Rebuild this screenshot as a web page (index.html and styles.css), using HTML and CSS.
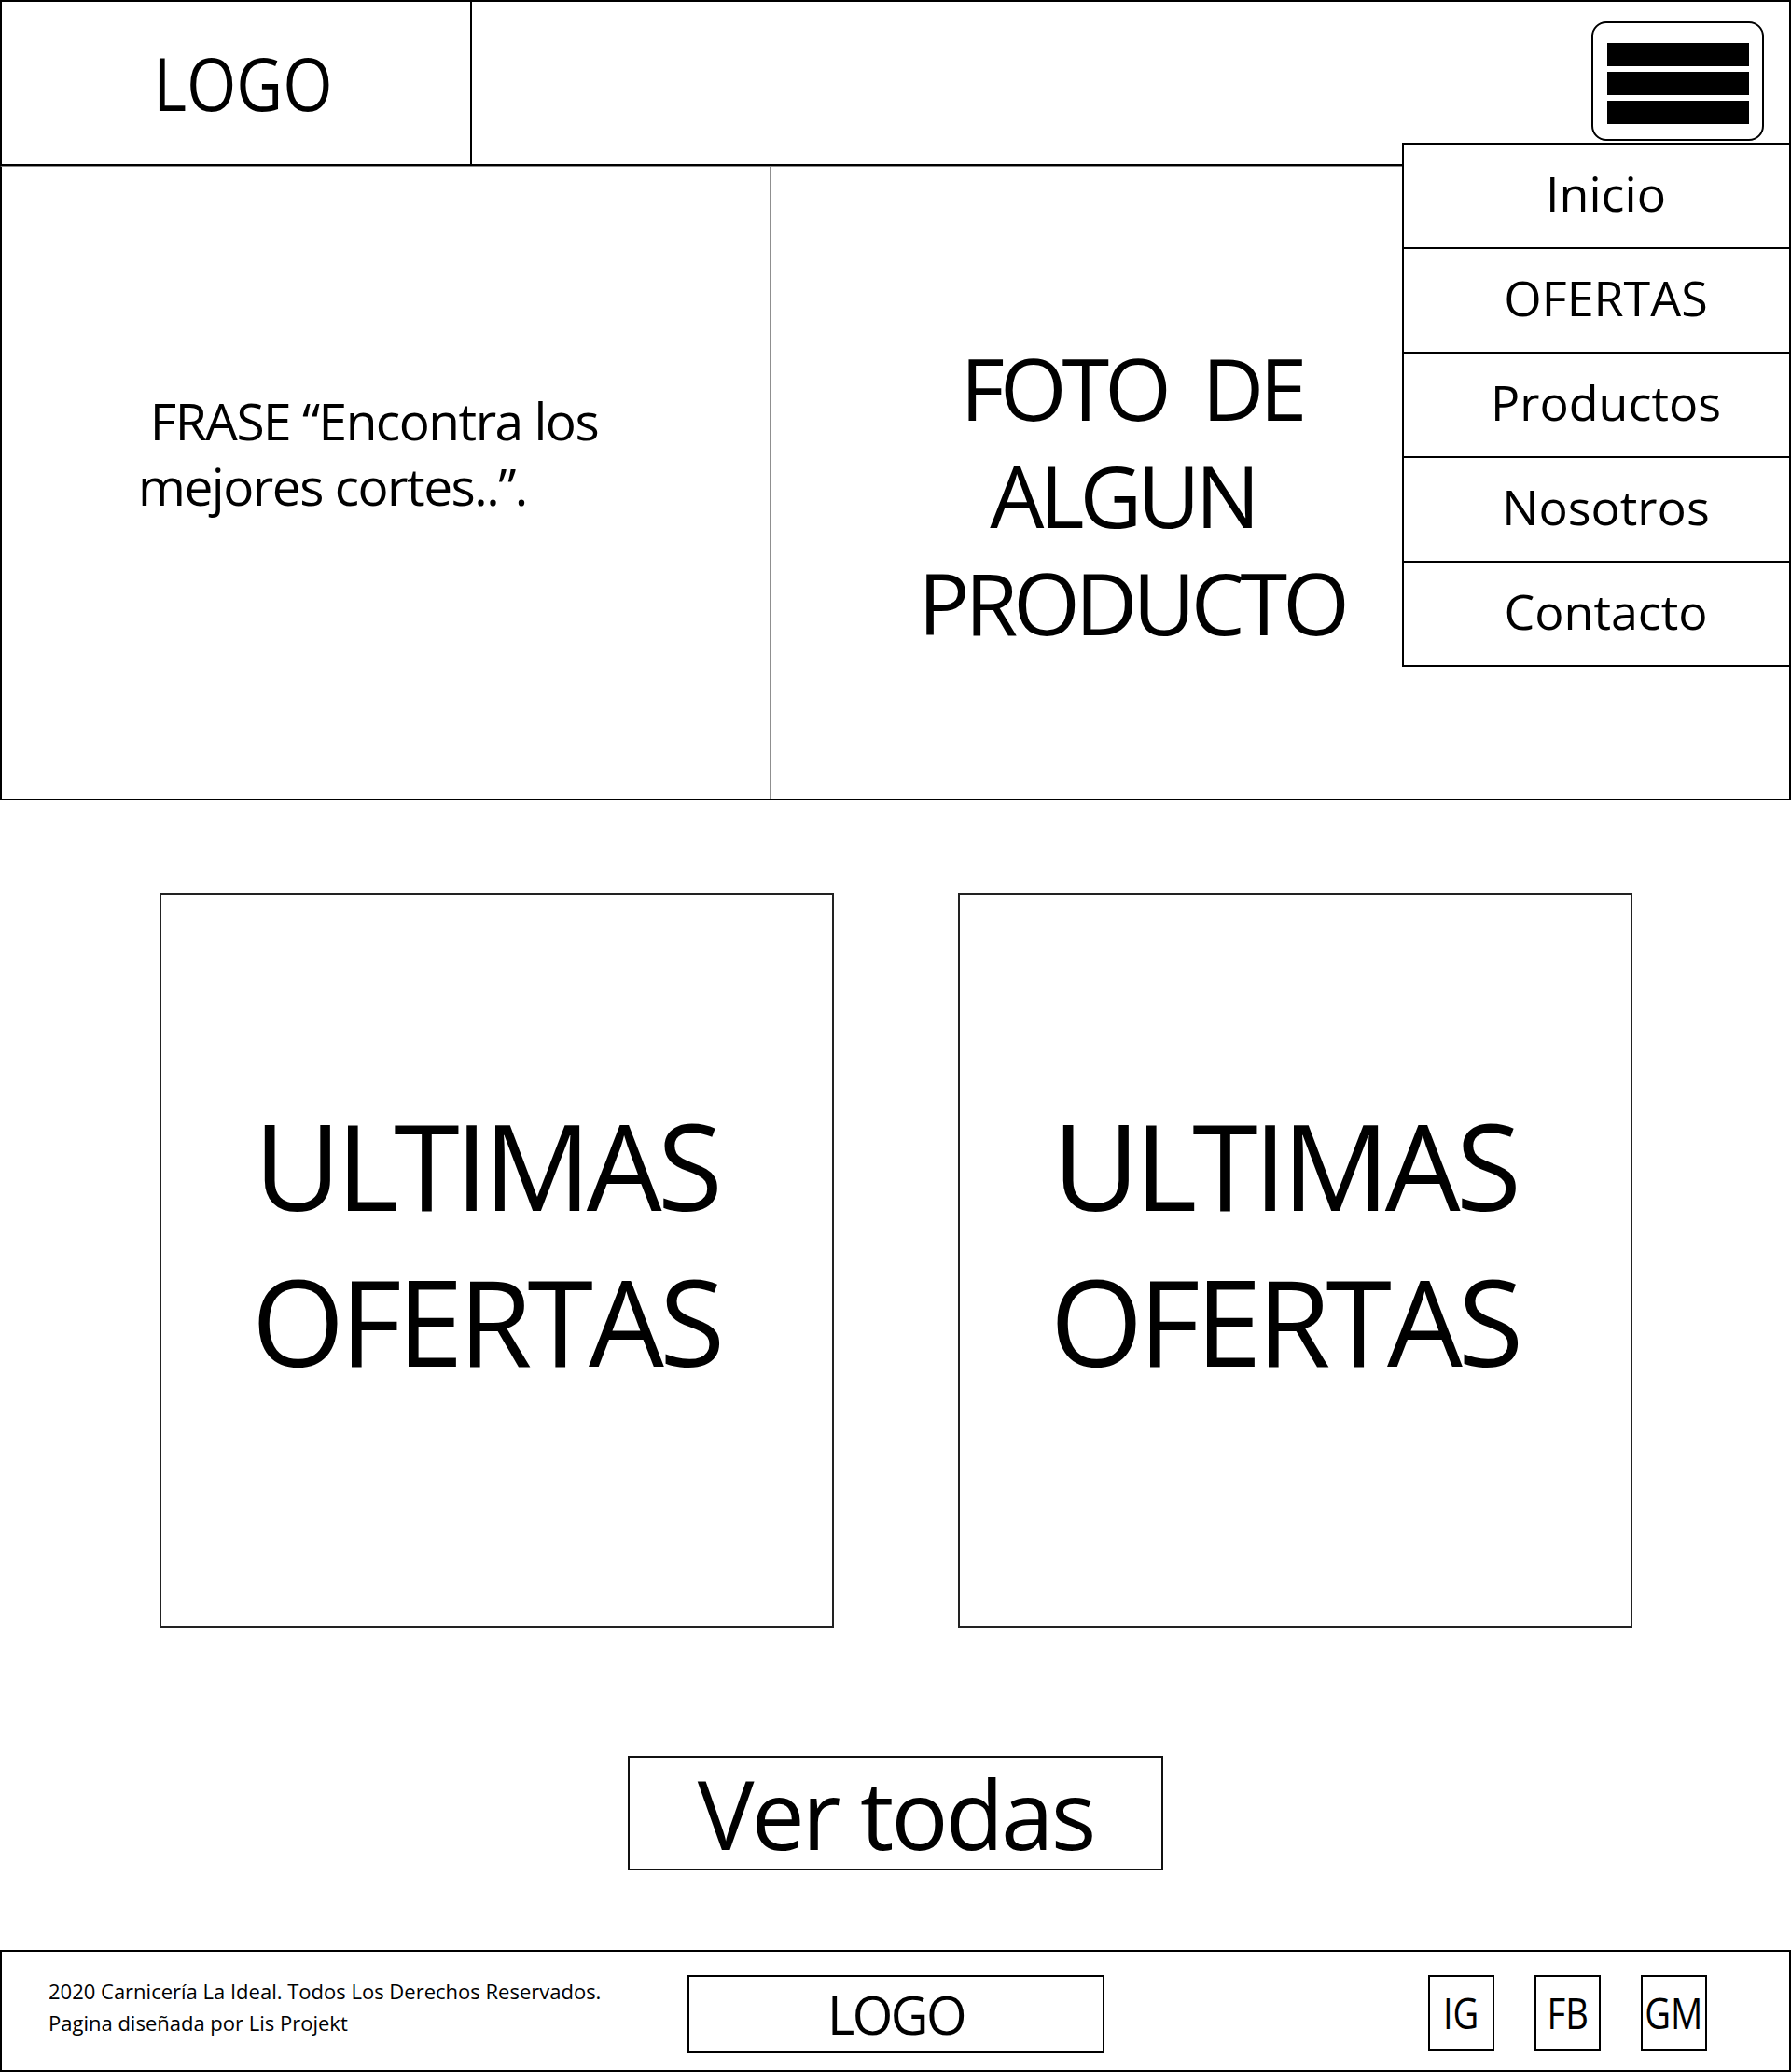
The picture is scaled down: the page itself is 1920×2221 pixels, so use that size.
FILE: index.html
```html
<!DOCTYPE html>
<html lang="es">
<head>
<meta charset="utf-8">
<title>Carnicería La Ideal</title>
<link rel="stylesheet" href="styles.css">
</head>
<body>
<div class="page">
  <header class="top">
    <div class="logo-cell"><span class="logo-text">LOGO</span></div>
    <div class="top-fill">
      <div class="burger" role="button" aria-label="Menu">
        <span class="bar"></span>
        <span class="bar"></span>
        <span class="bar"></span>
      </div>
    </div>
  </header>

  <nav class="menu">
    <div class="menu-item">Inicio</div>
    <div class="menu-item">OFERTAS</div>
    <div class="menu-item">Productos</div>
    <div class="menu-item">Nosotros</div>
    <div class="menu-item">Contacto</div>
  </nav>

  <section class="hero">
    <div class="hero-phrase">
      <p class="phrase">&nbsp;FRASE “Encontra los<br>mejores cortes..”.</p>
    </div>
    <div class="hero-photo">
      <p class="photo-text">FOTO&nbsp; DE<br>ALGUN&nbsp;<br>PRODUCTO</p>
    </div>
  </section>

  <section class="offers">
    <div class="card"><p class="card-text">ULTIMAS<br>OFERTAS</p></div>
    <div class="card"><p class="card-text">ULTIMAS<br>OFERTAS</p></div>
  </section>

  <div class="more">
    <a class="more-btn" href="#">Ver todas</a>
  </div>

  <footer class="foot">
    <div class="foot-text">
      <div>2020 Carnicería La Ideal. Todos Los Derechos Reservados.</div>
      <div>Pagina diseñada por Lis Projekt</div>
    </div>
    <div class="foot-logo">LOGO</div>
    <div class="social">
      <div class="social-item"><span>IG</span></div>
      <div class="social-item"><span>FB</span></div>
      <div class="social-item"><span>GM</span></div>
    </div>
  </footer>
</div>
</body>
</html>
```

FILE: styles.css
```css
body {
  margin: 0;
  background: #fff;
  color: #000;
  font-family: "Open Sans", "Liberation Sans", sans-serif;
}

.page {
  position: relative;
  width: 1920px;
}

/* Header */
.top {
  display: flex;
  height: 178px;
  box-sizing: border-box;
  border: 2px solid #000;
}

.logo-cell {
  width: 504px;
  box-sizing: border-box;
  border-right: 2px solid #000;
  padding-left: 14px;
  display: flex;
  justify-content: center;
  line-height: 174px;
}

.logo-text {
  display: inline-block;
  font-size: 78px;
  transform: scaleX(0.88);
}

.top-fill {
  flex: 1;
  display: flex;
  justify-content: flex-end;
  align-items: flex-start;
}

.burger {
  margin: 21px 27px 0 0;
  width: 185px;
  height: 128px;
  box-sizing: border-box;
  border: 2px solid #000;
  border-radius: 16px;
  background: #fff;
  padding: 21px 14px 0 15px;
  display: flex;
  flex-direction: column;
  gap: 6px;
}

.bar {
  display: block;
  height: 25px;
  background: #000;
}

/* Dropdown menu */
.menu {
  position: absolute;
  top: 153px;
  left: 1503px;
  width: 417px;
  box-sizing: border-box;
  border: 2px solid #000;
  border-bottom: 0;
  background: #fff;
  z-index: 2;
}

.menu-item {
  height: 112px;
  box-sizing: border-box;
  border-bottom: 2px solid #000;
  padding: 0 0 6px 20px;
  font-size: 52px;
  line-height: 104px;
  text-align: center;
}

/* Hero */
.hero {
  display: grid;
  grid-template-columns: 825px 1fr;
  height: 680px;
  box-sizing: border-box;
  border: 2px solid #000;
  border-top: 1px solid #8a8a8a;
}

.hero-phrase {
  border-right: 2px solid #8f8f8f;
  padding: 237px 0 0 146px;
}

.phrase {
  margin: 0;
  font-size: 55px;
  line-height: 70px;
  letter-spacing: -1.5px;
}

.hero-photo {
  padding: 179px 319px 0 0;
  text-align: center;
}

.photo-text {
  margin: 0;
  font-size: 92px;
  line-height: 115px;
  letter-spacing: -5px;
}

/* Offers */
.offers {
  display: flex;
  justify-content: center;
  gap: 133px;
  margin-top: 99px;
}

.card {
  width: 723px;
  height: 788px;
  box-sizing: border-box;
  border: 2px solid #222;
  padding: 206px 22px 0 0;
  text-align: center;
}

.card-text {
  margin: 0;
  font-size: 128px;
  line-height: 167px;
  letter-spacing: -5px;
}

/* Ver todas */
.more {
  display: flex;
  justify-content: center;
  margin-top: 137px;
}

.more-btn {
  display: block;
  width: 574px;
  height: 123px;
  box-sizing: border-box;
  border: 2px solid #111;
  color: #000;
  text-decoration: none;
  text-align: center;
  font-size: 102px;
  line-height: 119px;
  letter-spacing: -3px;
}

/* Footer */
.foot {
  margin-top: 85px;
  height: 131px;
  box-sizing: border-box;
  border: 2px solid #000;
  padding-top: 25px;
  display: flex;
  align-items: flex-start;
}

.foot-text {
  width: 735px;
  box-sizing: border-box;
  padding-left: 50px;
  font-size: 22px;
  line-height: 34px;
}

.foot-logo {
  width: 447px;
  height: 84px;
  box-sizing: border-box;
  border: 2px solid #000;
  text-align: center;
  font-size: 56px;
  line-height: 80px;
  letter-spacing: -2.5px;
}

.social {
  margin-left: auto;
  margin-right: 88px;
  display: flex;
  gap: 43px;
}

.social-item {
  width: 71px;
  height: 81px;
  box-sizing: border-box;
  border: 2px solid #000;
  display: flex;
  justify-content: center;
  font-size: 46px;
  line-height: 77px;
}

.social-item span {
  display: inline-block;
  transform: scaleX(0.83);
}
```
